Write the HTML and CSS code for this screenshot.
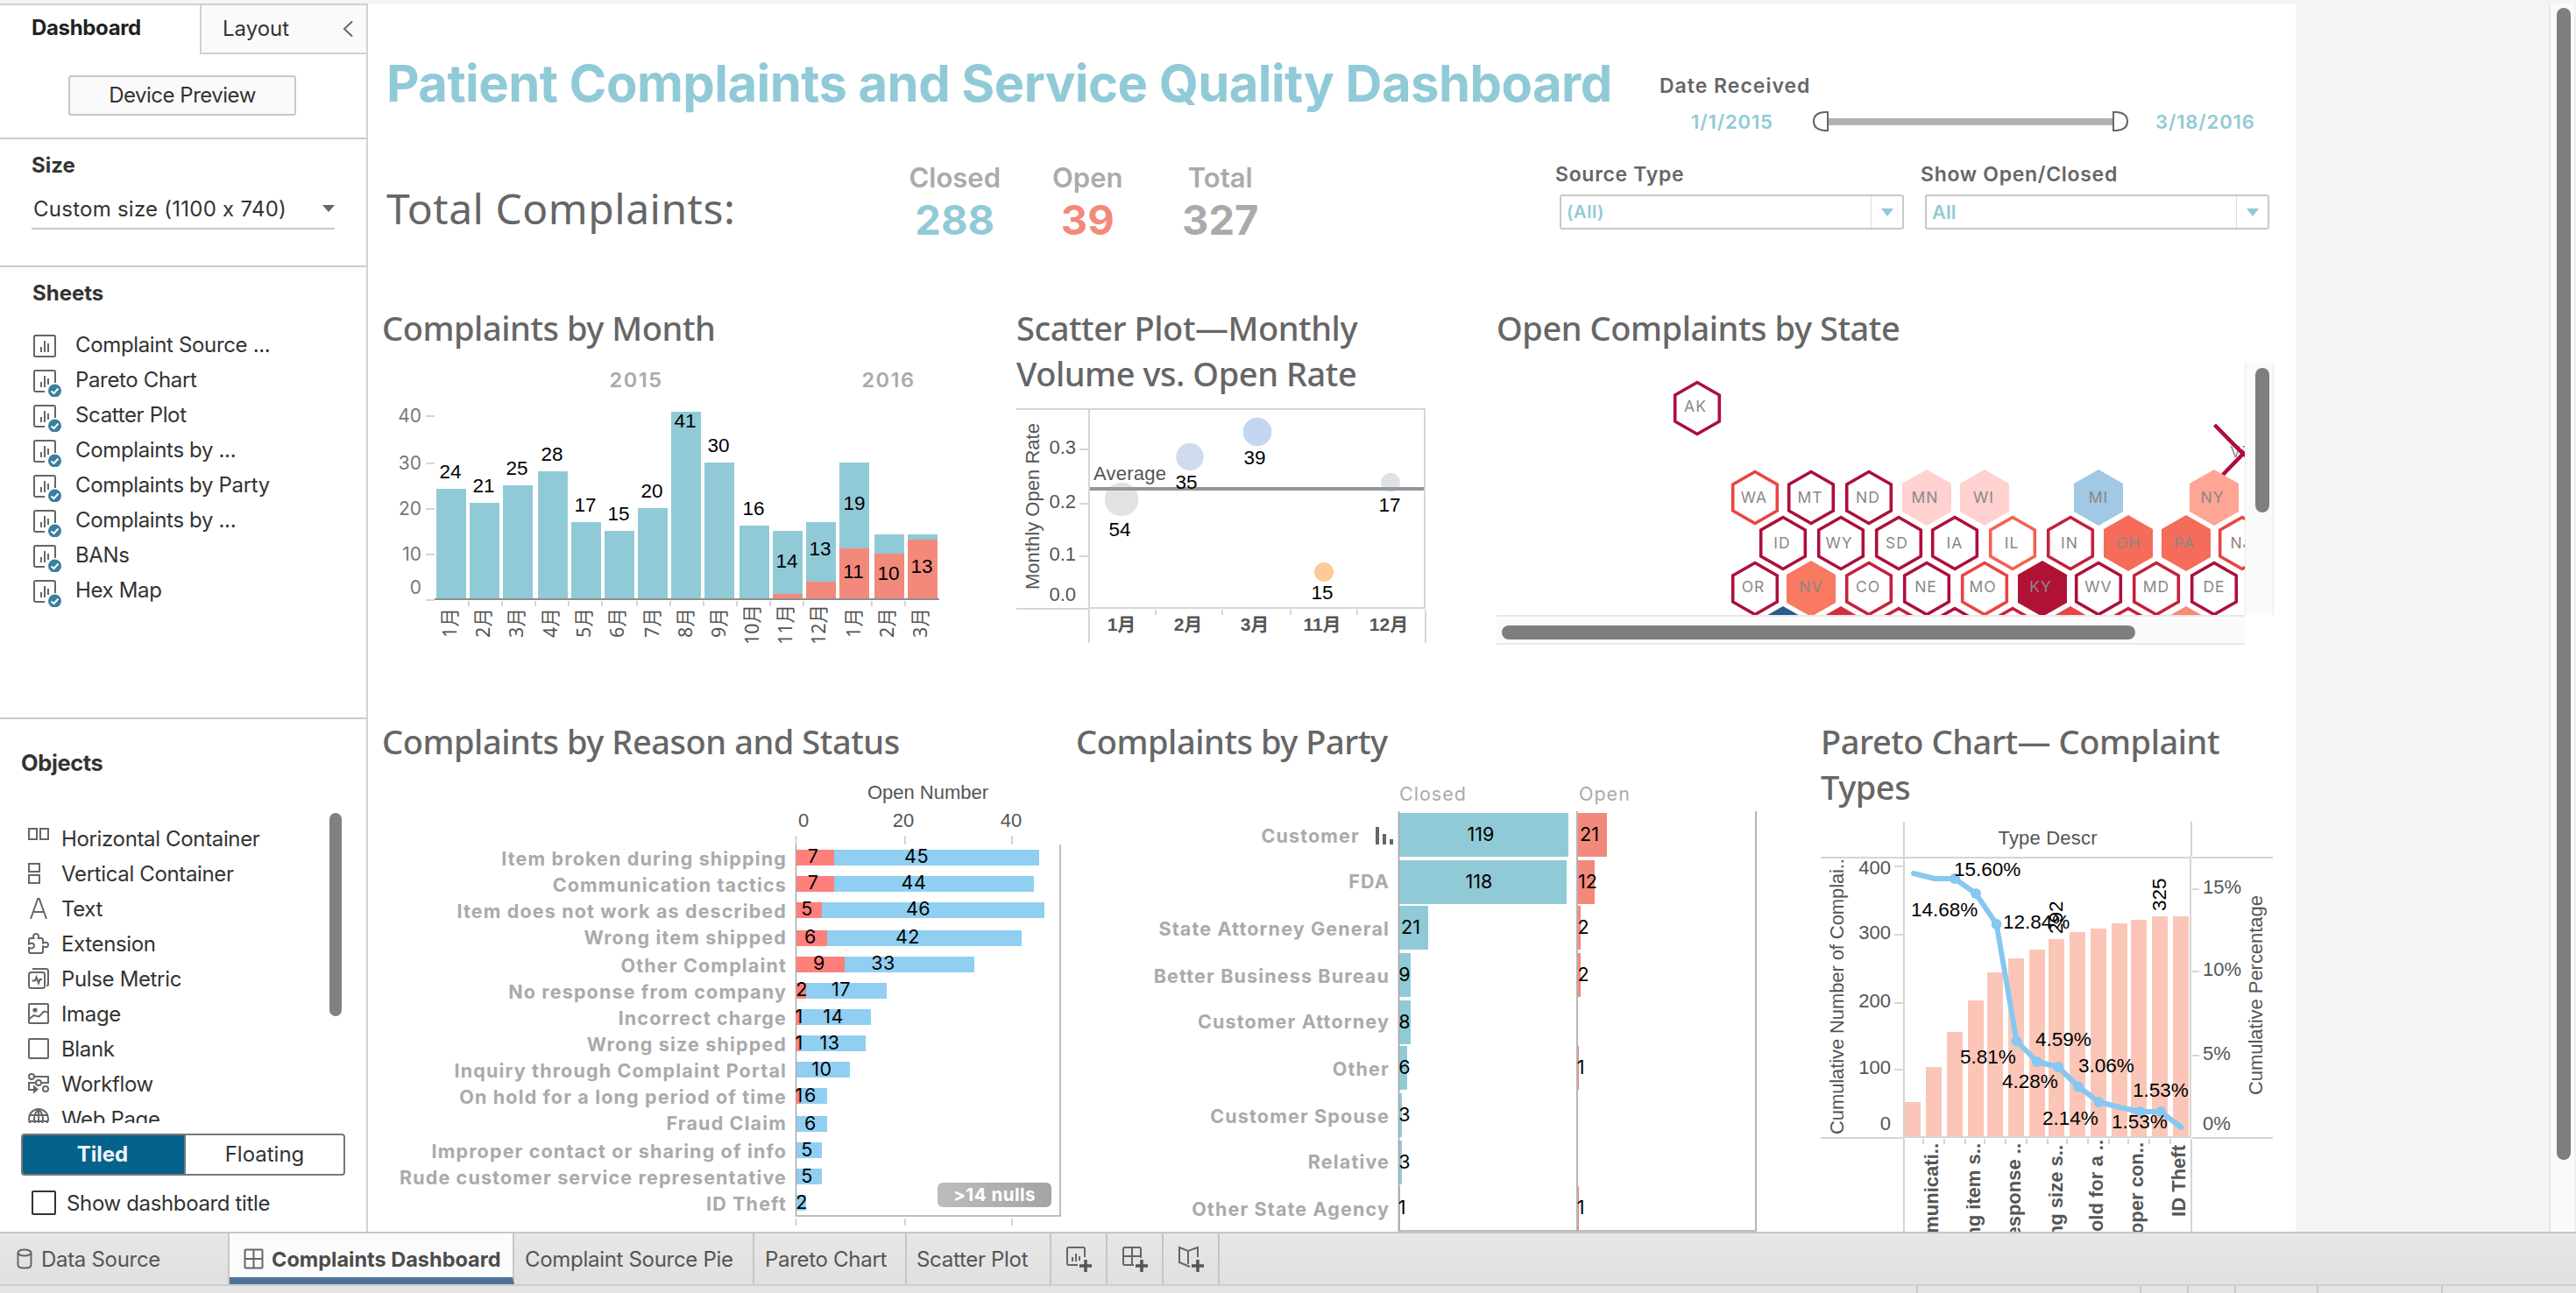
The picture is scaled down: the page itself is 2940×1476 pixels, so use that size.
FILE: index.html
```html
<!DOCTYPE html>
<html lang="en">
<head>
<meta charset="utf-8">
<title>Complaints Dashboard</title>
<link rel="stylesheet" href="styles.css">
</head>
<body>
<svg class="defs" width="0" height="0">
  <symbol id="sheet" viewBox="0 0 34 34">
    <rect x="1" y="4" width="24" height="24" rx="1.5" class="ln"/>
    <path d="M9 17v6M13 10v13M17 13v10" class="ln"/>
  </symbol>
  <symbol id="sheet-used" viewBox="0 0 34 34">
    <path d="M13 28H2.500a1.500 1.500 0 0 1-1.500-1.500V5.500A1.500 1.500 0 0 1 2.500 4h21A1.500 1.500 0 0 1 25 5.500V18" class="ln"/>
    <path d="M9 17v6M13 10v13M17 13v7" class="ln"/>
    <circle cx="24.500" cy="27" r="7.500" fill="#3a7f9f"/>
    <path d="M20.500 27.500l3 2.500 5-5.500" fill="none" stroke="#fff" stroke-width="2"/>
  </symbol>
</svg>

<div class="app">
  <main class="workspace">
    <aside class="sidebar">
      <div class="side-tabs">
        <div class="side-tab on">Dashboard</div>
        <div class="side-tab off"><span>Layout</span>
          <svg width="12" height="20" viewBox="0 0 12 20"><path d="M11 1.500L2 10l9 8.500" class="ln"/></svg>
        </div>
      </div>
      <section class="preview"><button class="preview-btn">Device Preview</button></section>
      <section class="size">
        <h3>Size</h3>
        <div class="size-select"><span>Custom size (1100 x 740)</span>
          <svg width="14" height="8" viewBox="0 0 14 8"><path d="M0 0h14L7 8z" fill="#666"/></svg>
        </div>
      </section>
      <section class="sheets">
        <h3>Sheets</h3>
        <ul class="list">
          <li><svg class="ico"><use href="#sheet"/></svg>Complaint Source ...</li>
          <li><svg class="ico"><use href="#sheet-used"/></svg>Pareto Chart</li>
          <li><svg class="ico"><use href="#sheet-used"/></svg>Scatter Plot</li>
          <li><svg class="ico"><use href="#sheet-used"/></svg>Complaints by ...</li>
          <li><svg class="ico"><use href="#sheet-used"/></svg>Complaints by Party</li>
          <li><svg class="ico"><use href="#sheet-used"/></svg>Complaints by ...</li>
          <li><svg class="ico"><use href="#sheet-used"/></svg>BANs</li>
          <li><svg class="ico"><use href="#sheet-used"/></svg>Hex Map</li>
        </ul>
      </section>
      <section class="objects">
        <h3>Objects</h3>
        <div class="object-scroll">
          <ul class="list">
            <li><svg class="oico" viewBox="0 0 24 24"><path d="M1 1h9v12H1zM14 1h9v12h-9z" class="ln"/></svg>Horizontal Container</li>
            <li><svg class="oico" viewBox="0 0 24 24"><path d="M1 1h12v9H1zM1 14h12v9H1z" class="ln"/></svg>Vertical Container</li>
            <li><svg class="oico" viewBox="0 0 24 24"><path d="M3 24L11.200 1h1.600L21 24M6 16h12" class="ln"/></svg>Text</li>
            <li><svg class="oico" viewBox="0 0 24 24"><path d="M1 9V8q0-2 2-2h3.500Q5 1 9 1t2.800 5H15q2 0 2 2v3.500q6-2 6 2T17 15.500V21q0 2-2 2H3q-2 0-2-2v-4q6 1.500 6-2.500T1 12.500V9" class="ln"/></svg>Extension</li>
            <li><svg class="oico" viewBox="0 0 24 24"><rect x="1" y="5" width="18" height="18" rx="2.500" class="ln"/><path d="M5 1h15.500Q23 1 23 3.500V19q0 1-2 1M4.500 14.500H8l1.500-4 2.500 7 1.500-4.500h2.500" class="ln"/></svg>Pulse Metric</li>
            <li><svg class="oico" viewBox="0 0 24 24"><rect x="1" y="1" width="22" height="22" rx="1" class="ln"/><path d="M1.500 18l5-4 6 1.500L18 9.500l4.500 1" class="ln"/><circle cx="8" cy="8" r="2.600" fill="#666"/></svg>Image</li>
            <li><svg class="oico" viewBox="0 0 24 24"><rect x="1" y="1" width="22" height="22" rx="1" class="ln"/></svg>Blank</li>
            <li><svg class="oico" viewBox="0 0 24 24"><circle cx="4" cy="4" r="3" class="ln"/><circle cx="12" cy="11" r="3" class="ln"/><circle cx="20" cy="18" r="3" class="ln"/><path d="M7 4h16v7h-8M9 11H1v8h6" class="ln"/><path d="M6 13.500v10l6-5z" fill="#666"/></svg>Workflow</li>
            <li><svg class="oico" viewBox="0 0 24 24"><circle cx="12" cy="12" r="11" class="ln"/><path d="M12 1v22M2 8h20M1 15h22M12 1q-10 11 0 22M12 1q10 11 0 22" class="ln"/></svg>Web Page</li>
          </ul>
          <div class="object-thumb"></div>
        </div>
        <div class="toggle"><b>Tiled</b><span>Floating</span></div>
        <label class="show-title"><i></i>Show dashboard title</label>
      </section>
    </aside>

    <div class="canvas">
      <div class="dashboard">
        <header class="head">
          <div class="head-left">
            <h1>Patient Complaints and Service Quality Dashboard</h1>
            <div class="totals">
              <div class="totals-label">Total Complaints:</div>
              <div class="ban closed"><span>Closed</span><b>288</b></div>
              <div class="ban open"><span>Open</span><b>39</b></div>
              <div class="ban total"><span>Total</span><b>327</b></div>
            </div>
          </div>
          <div class="filters">
            <div class="date">
              <label>Date Received</label>
              <div class="date-row">
                <span class="from">1/1/2015</span>
                <svg width="360" height="24" viewBox="0 0 360 24"><path d="M17 8h326v8H17z" fill="#b1b1b1"/><path d="M17 1v21h-4Q1 21 1 11.500T13 1zM343 1v21h4q12-1 12-10.500T347 1z" fill="#fff" stroke="#666" stroke-width="2"/></svg>
                <span class="to">3/18/2016</span>
              </div>
            </div>
            <div class="drops">
              <div class="drop"><label>Source Type</label><div class="box"><span class="paren">(All)</span><i><svg width="14" height="9" viewBox="0 0 14 9"><path d="M0 0h14L7 9z" fill="#91cad7"/></svg></i></div></div>
              <div class="drop"><label>Show Open/Closed</label><div class="box"><span>All</span><i><svg width="14" height="9" viewBox="0 0 14 9"><path d="M0 0h14L7 9z" fill="#91cad7"/></svg></i></div></div>
            </div>
          </div>
        </header>

        <div class="row row-top">
          <section class="panel month">
            <h2>Complaints by Month</h2>
            <svg width="710" height="350" viewBox="420 400 710 350">
              <g class="year"><text x="726" y="442">2015</text><text x="1014" y="442">2016</text></g>
              <g class="ytick"><text x="481" y="482">40</text><text x="481" y="536">30</text><text x="481" y="588">20</text><text x="481" y="640">10</text><text x="481" y="678">0</text></g>
              <path class="grid" d="M486 475h10M486 529h10M486 581h10M486 633h10M486 685h10M535 686v6M573 686v6M611 686v6M649 686v6M687 686v6M727 686v6M765 686v6M803 686v6M841 686v6M879 686v6M917 686v6M995 686v6M1033 686v6"/>
              <path fill="#91cad7" d="M498 558h34v126h-34zM536 574h34v110h-34zM574 554h34v130h-34zM614 538h34v146h-34zM652 596h34v88h-34zM690 606h34v78h-34zM728 580h34v104h-34zM766 470h34v214h-34zM804 528h34v156h-34zM844 600h34v84h-34zM882 606h34v78h-34zM920 596h34v88h-34zM958 528h34v156h-34zM998 610h34v74h-34zM1036 610h34v74h-34z"/>
              <path fill="#f3897b" d="M882 678h34v6h-34zM920 664h34v20h-34zM958 626h34v58h-34zM998 632h34v52h-34zM1036 616h34v68h-34z"/>
              <path d="M496 684h576" stroke="#8e8e8e" stroke-width="2"/>
              <g class="mark mid"><text x="514" y="546">24</text><text x="552" y="562">21</text><text x="590" y="542">25</text><text x="630" y="526">28</text><text x="668" y="584">17</text><text x="706" y="594">15</text><text x="744" y="568">20</text><text x="782" y="488">41</text><text x="820" y="516">30</text><text x="860" y="588">16</text><text x="898" y="648">14</text><text x="936" y="634">13</text><text x="975" y="582">19</text><text x="974" y="660">11</text><text x="1014" y="662">10</text><text x="1052" y="654">13</text></g>
              <g class="months"><text transform="translate(521 711) rotate(-90)">1月</text><text transform="translate(559 711) rotate(-90)">2月</text><text transform="translate(597 711) rotate(-90)">3月</text><text transform="translate(636 711) rotate(-90)">4月</text><text transform="translate(674 711) rotate(-90)">5月</text><text transform="translate(712 711) rotate(-90)">6月</text><text transform="translate(752 711) rotate(-90)">7月</text><text transform="translate(790 711) rotate(-90)">8月</text><text transform="translate(828 711) rotate(-90)">9月</text><text transform="translate(866 713) rotate(-90)">10月</text><text transform="translate(904 713) rotate(-90)">11月</text><text transform="translate(942 713) rotate(-90)">12月</text><text transform="translate(982 711) rotate(-90)">1月</text><text transform="translate(1020 711) rotate(-90)">2月</text><text transform="translate(1058 711) rotate(-90)">3月</text></g>
            </svg>
          </section>

          <section class="panel scatter">
            <h2>Scatter Plot—Monthly<br>Volume vs. Open Rate</h2>
            <svg width="560" height="300" viewBox="1130 452 560 300">
              <path class="grid" d="M1160 467h83M1160 695h83M1243 467h383v227h-383zM1243 696v38M1627 696v38M1319 696v6M1395 696v6M1473 696v6M1549 696v6M1232 513h10M1232 575h10M1232 635h10"/>
              <g class="axis end"><text x="1228" y="518">0.3</text><text x="1228" y="580">0.2</text><text x="1228" y="640">0.1</text><text x="1228" y="686">0.0</text></g>
              <text class="axis mid" transform="translate(1186 578) rotate(-90)" textLength="190">Monthly Open Rate</text>
              <circle cx="1358" cy="521.500" r="15.700" fill="#d0dbed"/>
              <circle cx="1435" cy="493" r="16.300" fill="#c3d7f2"/>
              <circle cx="1511" cy="653" r="11" fill="#ffca98"/>
              <path d="M1244 558h381" stroke="#959595" stroke-width="4"/>
              <circle cx="1280" cy="570" r="19.300" fill="#a0a0a0" fill-opacity=".3"/>
              <circle cx="1587" cy="550.700" r="10.900" fill="#8ea0b5" fill-opacity=".3"/>
              <text class="axis" x="1248" y="548" textLength="83">Average</text>
              <g class="mark mid"><text x="1278" y="612">54</text><text x="1354" y="558">35</text><text x="1432" y="530">39</text><text x="1586" y="584">17</text><text x="1509" y="684">15</text></g>
              <g class="xbold"><text x="1280" y="720">1月</text><text x="1356" y="720">2月</text><text x="1432" y="720">3月</text><text x="1509" y="720">11月</text><text x="1585" y="720">12月</text></g>
            </svg>
          </section>

          <section class="panel map">
            <h2>Open Complaints by State</h2>
            <div class="map-view">
              <svg class="hexes" width="854" height="288" viewBox="1708 414 854 288">
                <defs>
                  <path id="h" d="M0-29.500L25.300-15V15L0 29.500-25.300 15V-15z" fill="#fff" stroke-width="3.600"/>
                  <path id="f" d="M0-32L28-16V16L0 32-28 16V-16z"/>
                </defs>
                <g class="st"><text x="2558" y="522">VT</text></g>
                <path d="M2527.500 485L2560 518 2536 543M2557 514l8 8" fill="none" stroke="#ad0f3a" stroke-width="4.500"/>
                <g stroke="#ad0f3a">
                  <use href="#h" x="1937" y="466"/><use href="#h" x="2067" y="568"/><use href="#h" x="2133" y="568"/>
                  <use href="#h" x="2035" y="620"/><use href="#h" x="2101" y="620"/><use href="#h" x="2167" y="620"/><use href="#h" x="2231" y="620"/>
                  <use href="#h" x="2003" y="672"/><use href="#h" x="2199" y="672"/><use href="#h" x="2395" y="672"/><use href="#h" x="2527" y="672"/>
                  <use href="#h" x="2231" y="724"/>
                </g>
                <g stroke="#c5203c">
                  <use href="#h" x="2363" y="620"/><use href="#h" x="2133" y="672"/><use href="#h" x="2461" y="672"/><use href="#h" x="2167" y="724"/><use href="#h" x="2297" y="724"/><use href="#h" x="2429" y="724"/>
                </g>
                <g stroke="#e84444"><use href="#h" x="2003" y="568"/><use href="#h" x="2265" y="672"/><use href="#h" x="2559" y="620"/></g>
                <use href="#h" x="2297" y="620" stroke="#f26250"/>
                <use href="#f" x="2199" y="568" fill="#ffd1cf"/><use href="#f" x="2265" y="568" fill="#ffd1cf"/>
                <use href="#f" x="2395" y="568" fill="#a1c8e4"/><use href="#f" x="2527" y="568" fill="#fea593"/>
                <use href="#f" x="2429" y="620" fill="#f56c5b"/><use href="#f" x="2495" y="620" fill="#f56c5b"/>
                <use href="#f" x="2067" y="672" fill="#f97961"/><use href="#f" x="2331" y="672" fill="#b01236"/>
                <use href="#f" x="2035" y="724" fill="#2b5c8a"/><use href="#f" x="2101" y="724" fill="#d42d40"/><use href="#f" x="2363" y="724" fill="#e84545"/><use href="#f" x="2495" y="724" fill="#fb8871"/>
                <g class="st">
                  <text x="1935" y="470">AK</text>
                  <text x="2002" y="574">WA</text><text x="2066" y="574">MT</text><text x="2132" y="574">ND</text><text x="2197" y="574">MN</text><text x="2264" y="574">WI</text><text x="2395" y="574">MI</text><text x="2525" y="574">NY</text>
                  <text x="2034" y="626">ID</text><text x="2099" y="626">WY</text><text x="2165" y="626">SD</text><text x="2231" y="626">IA</text><text x="2296" y="626">IL</text><text x="2362" y="626">IN</text><text x="2429" y="626">OH</text><text x="2493" y="626">PA</text><text x="2558" y="626">NJ</text>
                  <text x="2001" y="676">OR</text><text x="2067" y="676">NV</text><text x="2132" y="676">CO</text><text x="2198" y="676">NE</text><text x="2263" y="676">MO</text><text x="2329" y="676">KY</text><text x="2395" y="676">WV</text><text x="2461" y="676">MD</text><text x="2527" y="676">DE</text>
                </g>
              </svg>
              <div class="vbar"><i></i></div>
              <div class="hbar"><i></i></div>
            </div>
          </section>
        </div>

        <div class="row row-bottom">
          <section class="panel reason">
            <h2>Complaints by Reason and Status</h2>
            <svg width="800" height="534" viewBox="420 872 800 534">
              <text class="axis mid" x="1059" y="912" textLength="138">Open Number</text>
              <g class="axis mid"><text x="917" y="944">0</text><text x="1031" y="944">20</text><text x="1154" y="944">40</text></g>
              <path class="grid" d="M908.500 954v10M1033 954v10M1155 954v10M908.500 1391v8M1033 1391v8M1155 1391v8"/>
              <path fill="#90cff1" d="M909 970h277v18H909zM909 1000h271v18H909zM909 1030h283v18H909zM909 1062h257v18H909zM909 1092h203v18H909zM909 1122h103v18H909zM909 1152h85v18h-85zM909 1182h79v18h-79zM909 1212h61v18h-61zM909 1242h35v18h-35zM909 1274h35v18h-35zM909 1304h29v18h-29zM909 1334h29v18h-29zM909 1364h11v18h-11z"/>
              <path fill="#ff7f7b" d="M909 970h43v18h-43zM909 1000h43v18h-43zM909 1030h29v18h-29zM909 1062h35v18h-35zM909 1092h55v18h-55zM909 1122h11v18h-11zM909 1152h5v18h-5zM909 1182h5v18h-5zM909 1242h5v18h-5z"/>
              <path d="M908.500 964v424H1210V964" fill="none" stroke="#a9a9a9" stroke-width="1.500"/>
              <g class="rowlabel"><text x="898" y="988">Item broken during shipping</text><text x="898" y="1018">Communication tactics</text><text x="898" y="1048">Item does not work as described</text><text x="898" y="1078">Wrong item shipped</text><text x="898" y="1110">Other Complaint</text><text x="898" y="1140">No response from company</text><text x="898" y="1170">Incorrect charge</text><text x="898" y="1200">Wrong size shipped</text><text x="898" y="1230">Inquiry through Complaint Portal</text><text x="898" y="1260">On hold for a long period of time</text><text x="898" y="1290">Fraud Claim</text><text x="898" y="1322">Improper contact or sharing of info</text><text x="898" y="1352">Rude customer service representative</text><text x="898" y="1382">ID Theft</text></g>
              <g class="value"><text x="928" y="985">7</text><text x="1046" y="985">45</text><text x="928" y="1015">7</text><text x="1043" y="1015">44</text><text x="921" y="1045">5</text><text x="1048" y="1045">46</text><text x="925" y="1077">6</text><text x="1036" y="1077">42</text><text x="935" y="1107">9</text><text x="1008" y="1107">33</text><text x="915" y="1137">2</text><text x="960" y="1137">17</text><text x="912" y="1168">1</text><text x="951" y="1168">14</text><text x="912" y="1198">1</text><text x="947" y="1198">13</text><text x="938" y="1228">10</text><text x="912" y="1258">1</text><text x="925" y="1258">6</text><text x="925" y="1290">6</text><text x="921" y="1320">5</text><text x="921" y="1350">5</text><text x="915" y="1380">2</text></g>
              <linearGradient id="ng"><stop stop-color="#bcbcbc"/><stop offset="1" stop-color="#a4a4a4"/></linearGradient>
              <rect x="1070" y="1350" width="130" height="28" rx="6" fill="url(#ng)"/>
              <text class="nulls" x="1135" y="1371">&gt;14 nulls</text>
            </svg>
          </section>

          <section class="panel party">
            <h2>Complaints by Party</h2>
            <svg width="840" height="534" viewBox="1210 872 840 534">
              <g class="colhead"><text x="1597" y="914">Closed</text><text x="1802" y="914">Open</text></g>
              <path fill="#91cad7" d="M1597 928h193v50h-193zM1597 982h191v50h-191zM1597 1034h33v50h-33zM1597 1088h13v50h-13zM1597 1142h13v50h-13zM1597 1194h9v50h-9zM1597 1248h3v50h-3zM1597 1302h3v50h-3zM1597 1354h1v50h-1z"/>
              <path fill="#f3897b" d="M1801 928h33v50h-33zM1801 982h19v50h-19zM1801 1034h3v50h-3zM1801 1088h3v50h-3zM1801 1194h1v50h-1zM1801 1354h1v50h-1z"/>
              <path d="M1596.500 926v479H2004V926M1800 926v479" fill="none" stroke="#a9a9a9" stroke-width="1.700"/>
              <g class="rowlabel"><text x="1552" y="962">Customer</text><text x="1586" y="1014">FDA</text><text x="1586" y="1068">State Attorney General</text><text x="1586" y="1122">Better Business Bureau</text><text x="1586" y="1174">Customer Attorney</text><text x="1586" y="1228">Other</text><text x="1586" y="1282">Customer Spouse</text><text x="1586" y="1334">Relative</text><text x="1586" y="1388">Other State Agency</text></g>
              <path d="M1570 944h4v20h-4zM1578 952h4v12h-4zM1586 958h4v6h-4z" fill="#666"/>
              <g class="value tight"><text x="1690" y="960">119</text><text x="1688" y="1014">118</text><text x="1610" y="1066">21</text><text x="1603" y="1120">9</text><text x="1603" y="1174">8</text><text x="1603" y="1226">6</text><text x="1603" y="1280">3</text><text x="1603" y="1334">3</text><text x="1600" y="1386">1</text><text x="1814" y="960">21</text><text x="1812" y="1014">12</text><text x="1807" y="1066">2</text><text x="1807" y="1120">2</text><text x="1804" y="1226">1</text><text x="1804" y="1386">1</text></g>
            </svg>
          </section>

          <section class="panel pareto">
            <h2>Pareto Chart— Complaint<br>Types</h2>
            <svg width="570" height="482" viewBox="2050 924 570 482">
              <path class="grid" d="M2173 938v40M2501 938v40M2078 979h95M2502 979h92M2173 979h327v319h-327zM2078 1299h95M2502 1299h92M2173 1300v108M2501 1300v108M2195 1300v6M2219 1300v6M2243 1300v6M2265 1300v6M2289 1300v6M2313 1300v6M2337 1300v6M2359 1300v6M2383 1300v6M2407 1300v6M2429 1300v6M2453 1300v6M2477 1300v6M2162 989h10M2162 1067h10M2162 1145h10M2162 1221h10M2502 1015h8M2502 1109h8M2502 1205h8"/>
              <path fill="#fbc6b8" d="M2174 1258h18v39h-18zM2198 1218h18v79h-18zM2222 1178h18v119h-18zM2246 1142h18v155h-18zM2268 1110h18v187h-18zM2292 1094h18v203h-18zM2316 1084h18v213h-18zM2338 1072h18v225h-18zM2362 1064h18v233h-18zM2386 1060h18v237h-18zM2410 1054h18v243h-18zM2432 1050h18v247h-18zM2456 1046h18v251h-18zM2480 1046h18v251h-18z"/>
              <path d="M2184 997L2208 1003H2231L2255 1020L2278.600 1055L2301.600 1188.500L2325 1212L2349 1218L2372 1240.500L2395.500 1258L2419 1264L2442.500 1269H2466L2489.500 1287" fill="none" stroke="#86c8f1" stroke-width="6" stroke-linejoin="round" stroke-linecap="round"/>
              <g fill="#86c8f1"><circle cx="2231" cy="1003" r="6"/><circle cx="2255" cy="1020" r="6"/><circle cx="2278.600" cy="1055" r="6"/><circle cx="2301.600" cy="1188.500" r="6"/><circle cx="2325" cy="1212" r="6"/><circle cx="2349" cy="1218" r="6"/><circle cx="2372" cy="1240.500" r="6"/><circle cx="2395.500" cy="1258" r="6"/><circle cx="2442.500" cy="1269" r="6"/><circle cx="2466" cy="1269" r="6"/></g>
              <text class="axis mid" x="2337" y="964" textLength="113">Type Descr</text>
              <g class="axis end"><text x="2158" y="998">400</text><text x="2158" y="1072">300</text><text x="2158" y="1150">200</text><text x="2158" y="1226">100</text><text x="2158" y="1290">0</text></g>
              <g class="axis"><text x="2514" y="1020">15%</text><text x="2514" y="1114">10%</text><text x="2514" y="1210">5%</text><text x="2514" y="1290">0%</text></g>
              <text class="axis" transform="translate(2104 1295) rotate(-90)" textLength="315">Cumulative Number of Complai..</text>
              <text class="axis" transform="translate(2582 1250) rotate(-90)" textLength="228">Cumulative Percentage</text>
              <g class="mark"><text x="2230" y="1000">15.60%</text><text x="2181" y="1046">14.68%</text><text x="2286" y="1060">12.84%</text><text x="2237" y="1214">5.81%</text><text x="2323" y="1194">4.59%</text><text x="2285" y="1242">4.28%</text><text x="2372" y="1224">3.06%</text><text x="2331" y="1284">2.14%</text><text x="2434" y="1252">1.53%</text><text x="2410" y="1288">1.53%</text><text transform="translate(2354 1066) rotate(-90)">292</text><text transform="translate(2472 1040) rotate(-90)">325</text></g>
              <g class="cat"><text transform="translate(2212 1305) rotate(-90)">Communicati..</text><text transform="translate(2260 1305) rotate(-90)">Wrong item s..</text><text transform="translate(2306 1305) rotate(-90)">No response ..</text><text transform="translate(2354 1307) rotate(-90)">Wrong size s..</text><text transform="translate(2400 1301) rotate(-90)">On hold for a ..</text><text transform="translate(2446 1304) rotate(-90)">Improper con..</text><text transform="translate(2494 1307) rotate(-90)">ID Theft</text></g>
            </svg>
          </section>
        </div>
      </div>
      <div class="page-scroll"><i></i></div>
    </div>
  </main>

  <nav class="tabs">
    <div class="tab source"><svg width="18" height="24" viewBox="0 0 18 24"><path d="M1.500 5v14q0 3.500 7.500 3.500t7.500-3.500V5" class="ln"/><ellipse cx="9" cy="5" rx="7.500" ry="3.500" class="ln"/></svg>Data Source</div>
    <div class="tab active"><svg width="24" height="24" viewBox="0 0 24 24"><rect x="1.500" y="1.500" width="20" height="21" rx="1" class="ln"/><path d="M11.500 1v22M1 12h21" class="ln"/></svg>Complaints Dashboard</div>
    <div class="tab pie">Complaint Source Pie</div>
    <div class="tab par">Pareto Chart</div>
    <div class="tab sca">Scatter Plot</div>
    <div class="tab new"><svg width="32" height="30" viewBox="0 0 32 30"><path d="M14 22H3.500a1.500 1.500 0 0 1-1.500-1.500V3.500A1.500 1.500 0 0 1 3.500 2h17A1.500 1.500 0 0 1 22 3.500V13M8 13v5M12 9v9M16 12v5" class="ln"/><path d="M16 23h14M23 16v14" stroke="#555" stroke-width="3.500"/></svg></div>
    <div class="tab new"><svg width="32" height="30" viewBox="0 0 32 30"><path d="M14 22H3.500a1.500 1.500 0 0 1-1.500-1.500V3.500A1.500 1.500 0 0 1 3.500 2h17A1.500 1.500 0 0 1 22 3.500V14M12 2v20M2 12h20" class="ln"/><path d="M16 23h14M23 16v14" stroke="#555" stroke-width="3.500"/></svg></div>
    <div class="tab new"><svg width="32" height="30" viewBox="0 0 32 30"><path d="M14 24L2 19V2l10 4L23 2v11M12 6v15" class="ln"/><path d="M16 23h14M23 16v14" stroke="#555" stroke-width="3.500"/></svg></div>
  </nav>
  <footer class="status"><i></i><i></i><i></i><i></i><i></i><i></i></footer>
</div>
</body>
</html>
```
FILE: styles.css
```css
* { box-sizing: border-box; }
body { margin: 0; overflow: hidden; background: #f4f4f4; color: #333; font-family: Inter, "Liberation Sans", sans-serif; font-size: 24px; }
h1, h2, h3, ul { margin: 0; padding: 0; }
svg { display: block; flex: none; }
.defs { position: absolute; }
.ln { fill: none; stroke: #666; stroke-width: 2; }
.app { display: flex; flex-direction: column; width: 2940px; height: 1476px; padding-top: 4px; }
.workspace { display: flex; height: 1402px; }

/* sidebar */
.sidebar { display: flex; flex-direction: column; width: 420px; background: #fff; border-right: 2px solid #d2d2d2; border-top: 2px solid #d0d0d0; white-space: nowrap; letter-spacing: -.35px; }
.side-tabs { display: flex; height: 56px; line-height: 52px; }
.side-tab.on { width: 228px; padding-left: 36px; font-weight: 700; color: #222; font-size: 24px; }
.side-tab.off { display: flex; justify-content: space-between; align-items: center; flex: 1; padding: 0 15px 0 24px; letter-spacing: 0; background: #fafafa; border-left: 2px solid #d0d0d0; border-bottom: 2px solid #d0d0d0; }
.sidebar section { border-bottom: 2px solid #ccc; }
.sidebar h3 { font-size: 24px; font-weight: 700; line-height: 30px; letter-spacing: 0; }
.preview { height: 97px; padding: 24px 0 0 78px; }
.preview-btn { width: 260px; height: 46px; padding: 0 0 2px; border: 2px solid #c8c8c8; border-radius: 3px; background: #fafafa; color: #333; font: inherit; letter-spacing: -.5px; }
.size { height: 146px; padding: 15px 36px 0 36px; }
.size-select { display: flex; align-items: center; justify-content: space-between; height: 46px; margin-top: 12px; padding-left: 2px; border-bottom: 2px solid #c8c8c8; font-feature-settings: "calt" 0; letter-spacing: .25px; }
.sheets { height: 516px; padding: 15px 0 0 37px; }
.sheets .list { margin-top: 23px; }
.list { list-style: none; }
.list li { display: flex; align-items: center; height: 40px; }
.ico { width: 34px; height: 34px; margin: 5px 14px 0 1px; }
.objects { height: 585px; }
.sidebar .objects { border: 0; }
.objects h3 { padding: 35px 0 0 24px; font-size: 25.500px; letter-spacing: -.4px; }
.object-scroll { display: flex; justify-content: space-between; height: 354px; margin-top: 42px; overflow: hidden; }
.object-scroll .list { padding: 9px 0 0 32px; }
.oico { width: 24px; height: 24px; margin-right: 14px; }
.object-thumb { width: 14px; height: 232px; margin-right: 28px; border-radius: 7px; background: #808080; }
.toggle { display: flex; width: 370px; height: 48px; margin: 12px 0 0 24px; border: 2px solid #777; border-radius: 4px; line-height: 43px; text-align: center; overflow: hidden; letter-spacing: 0; }
.toggle b { width: 188px; margin: -2px 0 -2px -2px; line-height: 47px; background: #05628b; color: #eef4fa; border-right: 2px solid #777; }
.toggle span { flex: 1; }
.show-title { display: flex; align-items: center; height: 28px; margin: 17px 0 0 36px; }
.show-title i { width: 28px; height: 28px; margin-right: 12px; border: 2px solid #333; border-radius: 2px; }

/* dashboard canvas */
.canvas { display: flex; justify-content: space-between; flex: 1; }
.dashboard { width: 2200px; background: #fff; }
.page-scroll { width: 31px; padding: 5px 0 0 7px; background: #fafafa; border-left: 2px solid #e8e8e8; border-right: 2px solid #f0f0f0; }
.page-scroll i { display: block; width: 16px; height: 1315px; border-radius: 8px; background: #7e7e7e; }

.head { display: flex; height: 336px; white-space: nowrap; }
.head-left { width: 1355px; padding: 56px 0 0 21px; }
h1 { font-size: 58px; line-height: 70px; font-weight: 700; letter-spacing: -.570px; color: #91cad7; }
.totals { display: flex; margin-top: 54px; }
.totals-label { width: 573px; margin-top: 21px; font: 48px/66px "Noto Sans", sans-serif; letter-spacing: .5px; color: #666; }
.ban { display: flex; flex-direction: column; width: 151.500px; text-align: center; color: #aaa; }
.ban span { font-size: 31px; line-height: 38px; font-weight: 600; }
.ban b { margin-top: 1px; font-size: 47px; line-height: 56px; font-weight: 700; }
.ban.closed b { color: #91cad7; }
.ban.open b { color: #f3897b; }
.filters { flex: 1; padding-top: 80px; font-weight: 600; }
.filters label { display: block; font-size: 23px; line-height: 28px; letter-spacing: .7px; color: #666; }
.date { padding-left: 119px; }
.date label { letter-spacing: 1px; }
.date-row { display: flex; align-items: center; height: 27px; margin: 13px 0 0 36px; font-size: 22px; letter-spacing: .9px; color: #91cad7; }
.date-row .from { width: 139px; }
.date-row .to { padding-left: 31px; }
.drops { display: flex; gap: 25px; margin-top: 33px; }
.drop { width: 392px; }
.drop .box { display: flex; justify-content: space-between; width: 393px; height: 40px; margin: 9px 0 0 5px; border: 2px solid #c9c9c9; border-radius: 3px; font-size: 22px; line-height: 36px; color: #91cad7; }
.drop .box span { padding-left: 6px; }
.drop .box .paren { font-size: 20px; letter-spacing: .6px; }
.drop .box i { display: flex; align-items: center; justify-content: center; width: 36px; border-left: 1px solid #ddd; }

.row { display: flex; }
.row-top { height: 470px; padding-top: 8px; }
.row-bottom { height: 596px; padding-top: 10px; overflow: hidden; }
.panel h2 { font: 500 38px/52px "Noto Sans", sans-serif; letter-spacing: -.450px; color: #666; white-space: nowrap; }
.month { width: 710px; }
.month h2 { padding-left: 16px; }
.scatter { width: 560px; }
.scatter h2 { padding-left: 30px; }
.map { width: 930px; }
.map h2 { padding-left: 18px; }
.reason { width: 790px; }
.reason h2 { padding-left: 16px; }
.party { width: 840px; }
.party h2 { padding-left: 18px; }
.pareto { width: 570px; }
.pareto h2 { padding-left: 28px; }

.map-view { display: grid; grid-template-columns: 854px 33px; grid-template-rows: 288px 34px; margin: 14px 0 0 18px; }
.vbar { padding: 6px 0 0 11px; background: #fafafa; border: solid #e8e8e8; border-width: 0 1px; }
.vbar i { display: block; width: 16px; height: 165px; border-radius: 8px; background: #7e7e7e; }
.hbar { padding: 10px 0 0 6px; background: #fafafa; border: solid #e8e8e8; border-width: 2px 0; }
.hbar i { display: block; width: 723px; height: 16px; border-radius: 8px; background: #7e7e7e; }

/* chart text */
.grid { fill: none; stroke: #d5d5d5; stroke-width: 2; }
.axis { font: 22px "Liberation Sans", sans-serif; fill: #555; }
.mark { font: 22.500px "Liberation Sans", sans-serif; fill: #000; }
.mid { text-anchor: middle; }
.end { text-anchor: end; }
.year { font: 600 23.500px Inter, sans-serif; letter-spacing: 1.500px; fill: #aaa; text-anchor: middle; }
.ytick { font: 21px Inter, sans-serif; fill: #777; text-anchor: end; }
.months { font: 21.500px "Noto Sans", "Noto Sans CJK JP", sans-serif; fill: #555; text-anchor: middle; }
.xbold { font: 700 21px "Liberation Sans", "Noto Sans CJK JP", sans-serif; fill: #555; text-anchor: middle; }
.st { font: 17.500px Inter, sans-serif; fill: #888; text-anchor: middle; letter-spacing: 1px; }
.value { font: 21.500px Inter, sans-serif; fill: #000; text-anchor: middle; letter-spacing: .5px; }
.value.tight { letter-spacing: 0; }
.rowlabel { font: 700 21.500px Inter, sans-serif; fill: #aaa; text-anchor: end; letter-spacing: 1.150px; }
.colhead { font: 21.500px Inter, sans-serif; fill: #aaa; letter-spacing: 1px; }
.nulls { font: 700 20.500px Inter, sans-serif; fill: #fff; text-anchor: middle; letter-spacing: .5px; }
.cat { font: 700 22px "Liberation Sans", sans-serif; fill: #555; text-anchor: end; }

/* bottom tabs */
.tabs { display: flex; height: 62px; border-top: 2px solid #c6c6c6; border-bottom: 2px solid #cecece; background: linear-gradient(#e7e7e7, #e0e0e0); color: #555; white-space: nowrap; }
.tab { display: flex; align-items: center; border-right: 2px solid #c6c6c6; font-size: 24px; letter-spacing: -.300px; }
.source { width: 262px; padding-left: 19px; gap: 10px; }
.active { width: 325px; padding: 8px 0 0 16px; gap: 8px; background: #fbfbfb; border-bottom: 8px solid #4d7399; font-weight: 700; color: #4c4c4c; font-size: 23.500px; letter-spacing: 0; }
.pie { width: 274px; padding-left: 12px; }
.par { width: 174px; padding-left: 12px; }
.sca { width: 165px; padding-left: 11px; }
.new { width: 64px; padding-left: 16px; }
.status { display: flex; height: 8px; padding-left: 2187px; background: #e4e4e4; }
.status i { width: 54px; border-left: 2px solid #c8c8c8; }
.status i:nth-child(1) { width: 255px; }
.status i:nth-child(4) { width: 94px; }
.status i:nth-child(5) { width: 142px; }
```
